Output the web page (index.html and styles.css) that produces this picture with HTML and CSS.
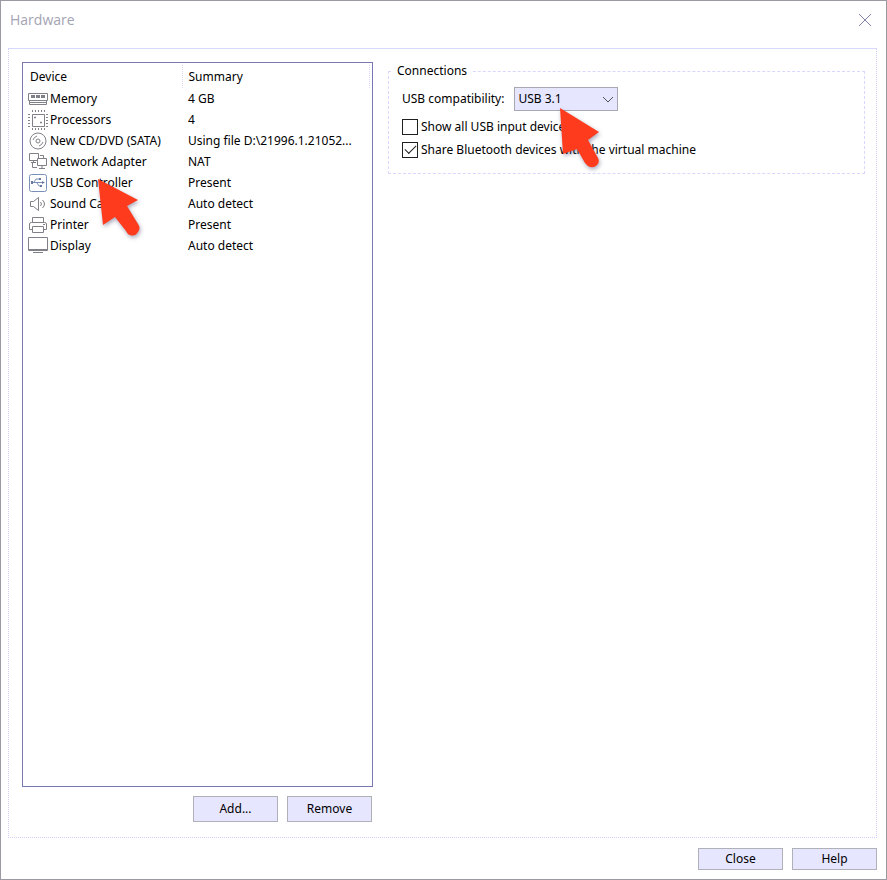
FILE: index.html
```html
<!DOCTYPE html>
<html lang="en">
<head>
    <meta charset="UTF-8">
    <meta name="viewport" content="width=device-width, initial-scale=1.0">
    <title>Hardware</title>
    <link rel="stylesheet" href="styles.css">
</head>
<body>
    <div class="dialog">
        <header class="title-bar">
            <h1>Hardware</h1>
            <button type="button" class="close-x" aria-label="Close window">
                <svg width="12" height="12" viewBox="0 0 12 12"><path d="M0 0L12 12M12 0L0 12"/></svg>
            </button>
        </header>

        <main class="panel">
            <section class="devices">
                <div class="device-list">
                    <table>
                        <thead>
                            <tr><th>Device</th><th>Summary</th></tr>
                        </thead>
                        <tbody>
                            <tr>
                                <td><div class="device">
                                    <svg class="icon" viewBox="0 0 20 20"><path d="M.5 4.500h19v7H.5zM1.500 11.500v4h17v-4M2 13.500h16"/><path class="chips" d="M3 6h4v3H3zM8 6h4v3H8zM13 6h4v3h-4z"/></svg>
                                    Memory
                                </div></td>
                                <td>4 GB</td>
                            </tr>
                            <tr>
                                <td><div class="device">
                                    <svg class="icon" viewBox="0 0 20 20"><path d="M4.500 4.500h12v12h-12z"/><path class="pins" d="M4 1h13M4 19h13M1 4v13M19 4v13"/><path d="M6 7.500h2M7 6.500v2M12 12.500h2M13 11.500v2"/></svg>
                                    Processors
                                </div></td>
                                <td>4</td>
                            </tr>
                            <tr>
                                <td><div class="device">
                                    <svg class="icon" viewBox="0 0 20 20"><circle cx="10" cy="10" r="8"/><circle cx="10" cy="10" r="2"/><path d="M5 9q1-3 4-4M15 11q-1 3-4 4"/></svg>
                                    New CD/DVD (SATA)
                                </div></td>
                                <td>Using file D:\21996.1.21052...</td>
                            </tr>
                            <tr>
                                <td><div class="device">
                                    <svg class="icon" viewBox="0 0 20 20"><path d="M1.500 1.500h9v7h-9zM3 10.500h5M5.500 8.500v2"/><path class="filled" d="M9.500 6.500h9v7h-9z"/><path d="M14 13.500v3M11 16.500h6M12 3.500h3.500V6M4.500 11v4.500H9"/></svg>
                                    Network Adapter
                                </div></td>
                                <td>NAT</td>
                            </tr>
                            <tr>
                                <td><div class="device">
                                    <svg class="icon usb" viewBox="0 0 20 20"><rect x="1.500" y="1.500" width="17" height="17" rx="2"/><path d="M4 9.500h12M6 9l2-3h4M9 10l2 3h3"/><path class="dots" d="M3 8h2v3H3zM11 5h2v2h-2zM12 12h2v2h-2zM14 8l3 1.500-3 1.500z"/></svg>
                                    USB Controller
                                    <svg class="pointer" width="48" height="64" viewBox="0 0 48 64"><path d="M1 1L41 22 30 28 41 46Q44 50 41 54 38 59 33 57 31 57 29 53L18 39 6 47Z"/></svg>
                                </div></td>
                                <td>Present</td>
                            </tr>
                            <tr>
                                <td><div class="device">
                                    <svg class="icon" viewBox="0 0 20 20"><path d="M2.500 7.500h3l5-4v13l-5-4h-3zM12.500 8q2 2 0 4M14.500 6q4 4 0 8"/></svg>
                                    Sound Card
                                </div></td>
                                <td>Auto detect</td>
                            </tr>
                            <tr>
                                <td><div class="device">
                                    <svg class="icon" viewBox="0 0 20 20"><path d="M4.500 7V2.500h11V7M4 14.500H1.500V9q0-1.500 2-1.500h13q2 0 2 1.500v5.500H16M4.500 11.500h11v6h-11zM15 9.500h2"/></svg>
                                    Printer
                                </div></td>
                                <td>Present</td>
                            </tr>
                            <tr>
                                <td><div class="device">
                                    <svg class="icon" viewBox="0 0 20 20"><path d="M.5 1.500h19v13H.5zM1 13.500h18M5 16.500h10"/></svg>
                                    Display
                                </div></td>
                                <td>Auto detect</td>
                            </tr>
                        </tbody>
                    </table>
                </div>
                <div class="actions">
                    <button type="button">Add...</button>
                    <button type="button">Remove</button>
                </div>
            </section>

            <section class="settings">
                <fieldset>
                    <legend>Connections</legend>
                    <div class="compatibility">
                        <label for="usb-version">USB compatibility:</label>
                        <div class="select-wrap">
                            <select id="usb-version">
                                <option>USB 1.1</option>
                                <option>USB 2.0</option>
                                <option selected>USB 3.1</option>
                            </select>
                            <svg class="chevron" width="12" height="7" viewBox="0 0 12 7"><path d="M1 1l5 5 5-5"/></svg>
                            <svg class="pointer" width="48" height="64" viewBox="0 0 48 64"><path d="M1 1L40 25 29 33 39 51Q41 55 38 58 34 62 29 59L26 56 18 42 4 47Z"/></svg>
                        </div>
                    </div>
                    <label class="check"><input type="checkbox"> Show all USB input devices</label>
                    <label class="check"><input type="checkbox" checked> Share Bluetooth devices with the virtual machine</label>
                </fieldset>
            </section>
        </main>

        <footer class="actions">
            <button type="button">Close</button>
            <button type="button">Help</button>
        </footer>
    </div>
</body>
</html>
```
FILE: styles.css
```css
* {
    box-sizing: border-box;
}

body {
    margin: 0;
    font-family: "Noto Sans", Tahoma, sans-serif;
    font-size: 12px;
    line-height: 16px;
    color: #000;
    background-color: #fff;
}

button, select {
    font: inherit;
    color: inherit;
}

.dialog {
    display: flex;
    flex-direction: column;
    min-height: 100vh;
    padding: 0 9px 9px 7px;
    border: 1px solid #9a9aa4;
}

.title-bar {
    display: flex;
    justify-content: space-between;
    align-items: center;
    height: 47px;
    padding: 0 6px 10px 2px;
}

.title-bar h1 {
    margin: 0;
    font-family: "Open Sans", sans-serif;
    font-size: 14px;
    font-weight: 400;
    color: #a4a4b4;
}

.close-x {
    display: flex;
    padding: 0;
    border: none;
    background: none;
}

.close-x path {
    stroke: #8080a8;
    fill: none;
}

.panel {
    flex: 1;
    display: flex;
    gap: 15px;
    padding: 13px 11px 15px 13px;
    border: 1px dotted #d0d0f8;
    border-top: 1px solid #d8d8ff;
}

/* Device list */
.devices {
    display: flex;
    flex-direction: column;
    flex: 0 0 351px;
}

.device-list {
    flex: 1;
    padding: 2px;
    border: 1px solid #7878b4;
}

table {
    width: 100%;
    table-layout: fixed;
    border-collapse: collapse;
}

th, td {
    height: 21px;
    padding: 0 0 0 6px;
    text-align: left;
    font-weight: 400;
    white-space: nowrap;
}

th {
    height: 23px;
    border-right: 1px dotted #d8d8f8;
}

th:first-child {
    width: 157px;
    padding-left: 5px;
}

td:first-child {
    padding-left: 3px;
}

.device {
    position: relative;
    display: flex;
    align-items: center;
    gap: 2px;
}

.icon {
    width: 20px;
    height: 20px;
    fill: none;
    stroke: #808088;
}

.icon .chips {
    fill: #808088;
    stroke: none;
}

.icon .pins {
    stroke-dasharray: 1 2;
    stroke-width: 2;
}

.icon .filled {
    fill: #fff;
}

.usb {
    stroke: #7890b8;
}

.icon .dots {
    fill: #6878a0;
    stroke: none;
}

.pointer {
    position: absolute;
    z-index: 1;
    pointer-events: none;
    filter: drop-shadow(1px 2px 2px rgba(80, 80, 120, 0.5));
}

.pointer path {
    fill: #ff3b1d;
}

.device .pointer {
    left: 69px;
    top: 5px;
}

/* Buttons */
.actions {
    display: flex;
    justify-content: flex-end;
    gap: 9px;
}

.actions button {
    width: 85px;
    height: 26px;
    padding: 0;
    border: 1px solid #b0b0b8;
    background-color: #e6e6ff;
}

.devices .actions {
    padding: 9px 1px 0 0;
}

footer.actions {
    padding-top: 10px;
}

footer.actions button {
    height: 22px;
}

/* USB settings */
.settings {
    flex: 1;
    padding-top: 1px;
}

fieldset {
    min-width: 0;
    margin: 0;
    padding: 8px 13px 15px;
    border: 1px dashed #d8d8ff;
}

legend {
    margin-left: -9px;
    padding: 0 4px;
}

.compatibility {
    display: flex;
    align-items: center;
    gap: 10px;
    margin-bottom: 8px;
}

.select-wrap {
    position: relative;
}

select {
    appearance: none;
    display: block;
    width: 104px;
    height: 24px;
    padding: 0 3px;
    border: 1px solid #a8a8b4;
    border-radius: 0;
    background-color: #e6e6ff;
}

.chevron {
    position: absolute;
    right: 4px;
    top: 9px;
    fill: none;
    stroke: #505058;
    pointer-events: none;
}

.select-wrap .pointer {
    left: 45px;
    top: 20px;
}

.check {
    display: flex;
    align-items: center;
    gap: 3px;
    height: 16px;
}

.check + .check {
    margin-top: 7px;
}

.check input {
    appearance: none;
    display: grid;
    place-items: center;
    width: 16px;
    height: 16px;
    margin: 0;
    border: 1px solid #202020;
    background-color: #fff;
}

.check input:checked::before {
    content: "";
    width: 10px;
    height: 5px;
    margin-bottom: 4px;
    border: solid #202020;
    border-width: 0 0 1px 1px;
    transform: rotate(-45deg);
}
```
